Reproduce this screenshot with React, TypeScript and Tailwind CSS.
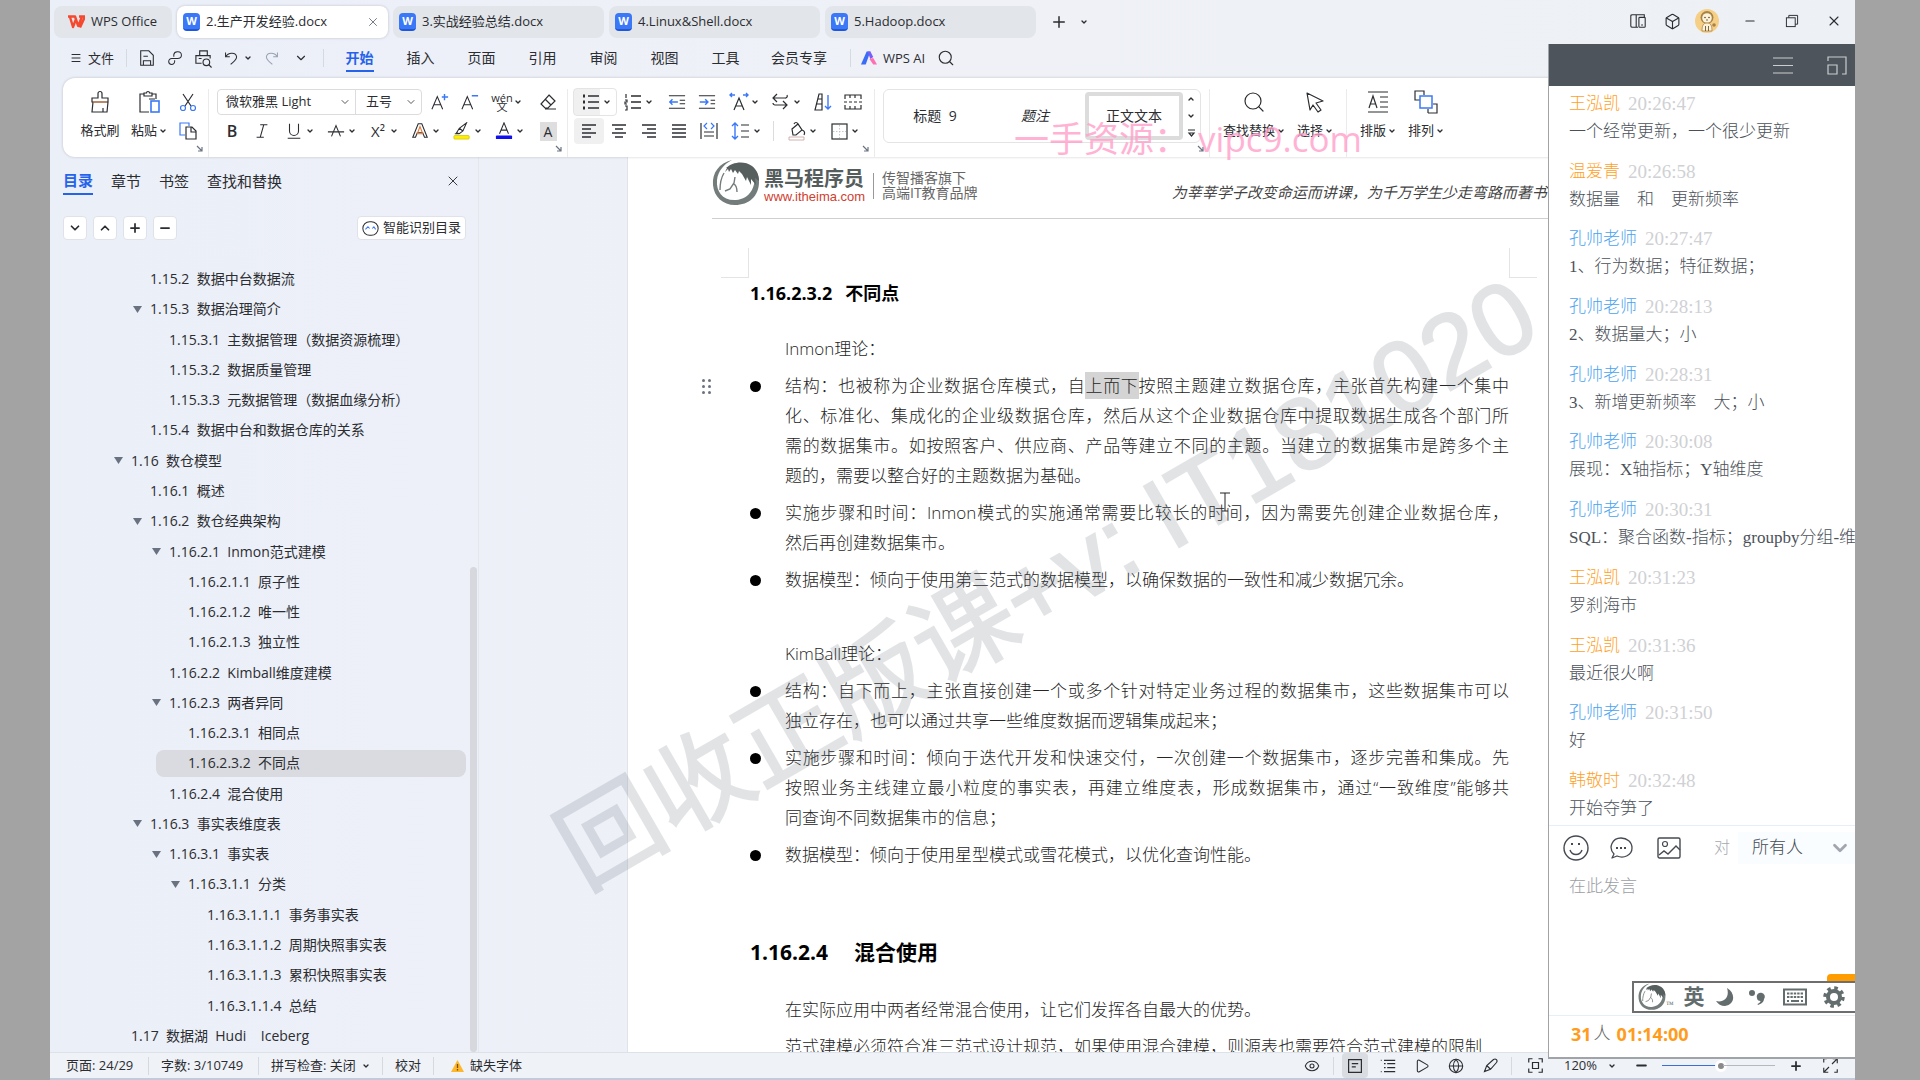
import React from 'react';
import {
  Search, X, Minus, Plus, ChevronDown, ChevronUp, Menu, Globe, Eye, Play, Box,
} from 'lucide-react';

type IconProps = { children: React.ReactNode; className?: string; size?: number; box?: number };

const Svg = ({ children, className = '', size = 20, box = 20 }: IconProps) => (
  <svg
    width={size}
    height={size}
    viewBox={`0 0 ${box} ${box}`}
    fill="none"
    stroke="currentColor"
    strokeWidth={1.2}
    className={className}
    aria-hidden="true"
  >
    {children}
  </svg>
);

const Chev = () => <ChevronDown className="w-2 h-2 shrink-0" strokeWidth={4} />;

const Tool = ({ label, children, active = false }: { label: string; children: React.ReactNode; active?: boolean }) => (
  <button
    aria-label={label}
    className={`w-[30px] h-[26px] shrink-0 flex items-center justify-center rounded ${active ? 'bg-[#f0f0f0]' : ''}`}
  >
    {children}
  </button>
);

const DropTool = ({ label, children }: { label: string; children: React.ReactNode }) => (
  <button aria-label={label} className="w-[42px] h-[26px] shrink-0 pl-[5px] flex items-center">
    <span className="w-6 flex justify-center">{children}</span>
    <Chev />
  </button>
);

const BigTool = ({ label, icon, drop = true }: { label: string; icon: React.ReactNode; drop?: boolean }) => (
  <button className="flex flex-col items-center shrink-0 text-[13px]">
    <span className="h-[26px] flex items-center">{icon}</span>
    <span className="h-[26px] mt-[3px] flex items-center gap-0.5 whitespace-nowrap">
      {label}
      {drop && <Chev />}
    </span>
  </button>
);

const Launcher = () => (
  <Svg size={8} box={8} className="absolute right-1 bottom-1 text-gray-500">
    <path d="M1 1l5 5M6 2v4H2" />
  </Svg>
);

const Lines = ({ rows }: { rows: [number, number][] }) => (
  <Svg>
    {rows.map(([a, b], i) => (
      <path key={i} d={`M${a} ${4 + i * 4}H${b}`} strokeWidth={1.4} />
    ))}
  </Svg>
);

const HorseLogo = ({ size }: { size: number }) => (
  <svg width={size} height={size} viewBox="0 0 48 48" fill="none" aria-hidden="true">
    <path
      d="M20 1C7 4 0 14 1 26c1 12 10 20 22 20 14 0 24-9 24-23 0-4-1-8-3-11l-2 1c3 14-4 27-18 28C11 42 4 33 5 21 6 12 12 5 20 1z"
      fill="#737b7b"
    />
    <path
      d="M14 9C20 3 32 1 40 7c5 4 7 9 7 15l-4-3 1 7-5-6 0 6-4-8-1 4-4-7-3-3-1 3-3-4-2 3-2-4-2 3-1-3-3 3 2-4z"
      fill="#565e5e"
    />
    <path d="M12 14c-3 5-4 11-4 17M23 18l-1 6-4 6-5 2M22 25c3 2 3 5 3 8" stroke="#737b7b" strokeWidth="1.4" />
  </svg>
);

const tree: { level: number; no: string; title: string; open?: boolean; active?: boolean }[] = [
  { level: 1, no: '1.15.2', title: '数据中台数据流' },
  { level: 1, no: '1.15.3', title: '数据治理简介', open: true },
  { level: 2, no: '1.15.3.1', title: '主数据管理（数据资源梳理）' },
  { level: 2, no: '1.15.3.2', title: '数据质量管理' },
  { level: 2, no: '1.15.3.3', title: '元数据管理（数据血缘分析）' },
  { level: 1, no: '1.15.4', title: '数据中台和数据仓库的关系' },
  { level: 0, no: '1.16', title: '数仓模型', open: true },
  { level: 1, no: '1.16.1', title: '概述' },
  { level: 1, no: '1.16.2', title: '数仓经典架构', open: true },
  { level: 2, no: '1.16.2.1', title: 'Inmon范式建模', open: true },
  { level: 3, no: '1.16.2.1.1', title: '原子性' },
  { level: 3, no: '1.16.2.1.2', title: '唯一性' },
  { level: 3, no: '1.16.2.1.3', title: '独立性' },
  { level: 2, no: '1.16.2.2', title: 'Kimball维度建模' },
  { level: 2, no: '1.16.2.3', title: '两者异同', open: true },
  { level: 3, no: '1.16.2.3.1', title: '相同点' },
  { level: 3, no: '1.16.2.3.2', title: '不同点', active: true },
  { level: 2, no: '1.16.2.4', title: '混合使用' },
  { level: 1, no: '1.16.3', title: '事实表维度表', open: true },
  { level: 2, no: '1.16.3.1', title: '事实表', open: true },
  { level: 3, no: '1.16.3.1.1', title: '分类', open: true },
  { level: 4, no: '1.16.3.1.1.1', title: '事务事实表' },
  { level: 4, no: '1.16.3.1.1.2', title: '周期快照事实表' },
  { level: 4, no: '1.16.3.1.1.3', title: '累积快照事实表' },
  { level: 4, no: '1.16.3.1.1.4', title: '总结' },
  { level: 0, no: '1.17', title: '数据湖  Hudi    Iceberg' },
];

const indents = ['ml-[49px]', 'ml-[68px]', 'ml-[87px]', 'ml-[106px]', 'ml-[125px]'];

const messages = [
  { name: '王泓凯', time: '20:26:47', text: '一个经常更新，一个很少更新' },
  { name: '温爱青', time: '20:26:58', text: '数据量　和　更新频率' },
  { name: '孔帅老师', time: '20:27:47', text: '1、行为数据；特征数据；', teacher: true },
  { name: '孔帅老师', time: '20:28:13', text: '2、数据量大；小', teacher: true },
  { name: '孔帅老师', time: '20:28:31', text: '3、新增更新频率　大；小', teacher: true },
  { name: '孔帅老师', time: '20:30:08', text: '展现：X轴指标；Y轴维度', teacher: true },
  { name: '孔帅老师', time: '20:30:31', text: 'SQL：聚合函数-指标；groupby分组-维度', teacher: true },
  { name: '王泓凯', time: '20:31:23', text: '罗刹海市' },
  { name: '王泓凯', time: '20:31:36', text: '最近很火啊' },
  { name: '孔帅老师', time: '20:31:50', text: '好', teacher: true },
  { name: '韩敬时', time: '20:32:48', text: '开始夺笋了' },
];

const WordBadge = () => (
  <span className="w-[17px] h-[18px] shrink-0 rounded-sm bg-[#3b78f7] border-b-2 border-[#1f57d8] text-white text-[11px] leading-4 font-bold text-center">
    W
  </span>
);

const DocTab = ({ name, active = false }: { name: string; active?: boolean }) => (
  <div
    className={`w-[211px] h-8 shrink-0 px-1.5 rounded-lg flex items-center text-[13px] ${
      active ? 'bg-white shadow-[0_0_3px_rgba(0,0,0,0.2)]' : 'bg-[#e2e5ea]'
    }`}
  >
    <WordBadge />
    <span className="ml-1.5 whitespace-nowrap">{name}</span>
    {active && (
      <button aria-label="关闭标签" className="ml-auto mr-0.5">
        <X className="w-3.5 h-3.5 text-gray-500" strokeWidth={1.6} />
      </button>
    )}
  </div>
);

const TitleBar = () => (
  <header className="h-[42px] pt-1.5 pl-1 flex items-start gap-[5px]">
    <div className="w-[118px] h-8 shrink-0 pl-3.5 rounded-lg bg-[#e2e5ea] flex items-center text-[13px]">
      <svg width="17" height="14" viewBox="0 0 17 14" fill="none" stroke="#f5492f" strokeWidth="2.4" aria-hidden="true">
        <path d="M0 1.500h7l3 9M2 2l3 10 3-8M10 12l4-10.500M11 1.500h6l-5 11" strokeLinejoin="round" />
      </svg>
      <span className="ml-1.5 whitespace-nowrap">WPS Office</span>
    </div>
    <DocTab name="2.生产开发经验.docx" active />
    <DocTab name="3.实战经验总结.docx" />
    <DocTab name="4.Linux&Shell.docx" />
    <DocTab name="5.Hadoop.docx" />
    <button aria-label="新建" className="w-8 h-8 ml-0.5 flex items-center justify-center">
      <Plus className="w-[18px] h-[18px]" strokeWidth={2} />
    </button>
    <button aria-label="标签列表" className="h-8 flex items-center">
      <Chev />
    </button>
    <div className="ml-auto h-[30px] flex items-center">
      <button aria-label="侧栏" className="w-[34px] flex justify-center">
        <Svg size={18}>
          <path d="M8 3H4C2.500 3 2 3.500 2 4.500v11c0 1 .5 1.500 2 1.500h6M8 3v14M8 3h9v3" />
          <rect x="11" y="6" width="7" height="11" rx="1" />
          <path d="M13.500 14.500h2" />
        </Svg>
      </button>
      <button aria-label="应用" className="w-[34px] flex justify-center">
        <Box className="w-[17px] h-[17px]" strokeWidth={1.6} />
      </button>
      <button aria-label="账号" className="w-9 mr-1 flex justify-center">
        <svg width="24" height="24" viewBox="0 0 24 24" aria-hidden="true">
          <circle cx="12" cy="12" r="12" fill="#f6cf86" />
          <circle cx="12" cy="8.500" r="6.500" fill="#a98346" />
          <circle cx="12" cy="9" r="4.800" fill="#fdf3d9" />
          <path d="M7 22c0-5 1-8 5-8s5 3 5 8z" fill="#fdf3d9" stroke="#a98346" strokeWidth="0.8" />
          <circle cx="10" cy="8.500" r=".8" fill="#5c4524" />
          <circle cx="14" cy="8.500" r=".8" fill="#5c4524" />
          <path d="M11 11h2M10.500 17v5M13.500 17v5" stroke="#5c4524" strokeWidth=".8" />
          <circle cx="19" cy="16" r="1.800" fill="#a98346" />
        </svg>
      </button>
      <button aria-label="最小化" className="w-[42px] flex justify-center">
        <Minus className="w-3.5 h-3.5" strokeWidth={2} />
      </button>
      <button aria-label="还原" className="w-[42px] flex justify-center">
        <Svg size={16}>
          <rect x="3" y="6" width="11" height="11" />
          <path d="M6 6V3h11v11h-3" />
        </Svg>
      </button>
      <button aria-label="关闭" className="w-[42px] flex justify-center">
        <X className="w-4 h-4" strokeWidth={1.6} />
      </button>
    </div>
  </header>
);

const Divider = () => <span className="w-px h-[18px] shrink-0 bg-[#d5d9e0]" />;

const MenuBar = () => (
  <nav className="h-8 pl-5 flex items-center text-sm">
    <button className="w-14 shrink-0 flex items-center gap-1.5">
      <Menu className="w-3 h-3.5 shrink-0" strokeWidth={2} />
      <span className="text-[13px]">文件</span>
    </button>
    <Divider />
    <div className="w-[196px] shrink-0 pl-1.5 flex items-center">
      <button aria-label="保存" className="w-7 flex justify-center">
        <Svg size={18}>
          <path d="M3 2h9l5 5v11H3zM6 18v-5h8v5M6 8h5" />
        </Svg>
      </button>
      <button aria-label="输出" className="w-7 flex justify-center">
        <Svg size={17}>
          <path d="M8 8V5.500a4.500 4 0 1 1 4.500 4.500H8M8 10H5.500A3.500 3.500 0 1 0 9 13.500V12" />
        </Svg>
      </button>
      <button aria-label="打印预览" className="w-7 flex justify-center">
        <Svg size={19}>
          <path d="M6 7V2h8v5M8 15H2V7h15v3M5 10h3" />
          <circle cx="13" cy="14" r="3.500" />
          <path d="M15.500 16.500l3 3" />
        </Svg>
      </button>
      <button aria-label="撤销" className="w-9 flex items-center pl-1.5 gap-1">
        <Svg size={17}>
          <path d="M3 3v5h5M3 8c3-5 12-6 13 0 0 4-4 6-7 9" />
        </Svg>
        <Chev />
      </button>
      <button aria-label="恢复" className="w-9 flex justify-center text-gray-400">
        <Svg size={17}>
          <path d="M17 3v5h-5M17 8c-3-5-12-6-13 0 0 4 4 6 7 9" />
        </Svg>
      </button>
      <button aria-label="更多" className="w-4 ml-1 flex justify-center">
        <ChevronDown className="w-3.5 h-3.5" strokeWidth={2} />
      </button>
    </div>
    <Divider />
    <div className="pl-[5px] pr-2 flex items-center">
      {['开始', '插入', '页面', '引用', '审阅', '视图', '工具'].map((item, i) => (
        <button key={item} className="w-[61px] h-8 shrink-0 flex justify-center">
          <span
            className={`h-[30px] leading-8 border-b-2 whitespace-nowrap ${
              i === 0 ? 'text-[#2563eb] font-bold border-[#2563eb]' : 'border-transparent'
            }`}
          >
            {item}
          </span>
        </button>
      ))}
      <button className="w-[86px] shrink-0 whitespace-nowrap">会员专享</button>
    </div>
    <Divider />
    <button className="ml-2.5 flex items-center gap-1.5 text-[13px] whitespace-nowrap">
      <svg width="16" height="15" viewBox="0 0 17 15" aria-hidden="true">
        <path d="M6 0h4L5 14H0z" fill="#3a6df5" />
        <path d="M7 0h3l3 6-3 2z" fill="#7b5bf6" />
        <path d="M9 8l4-1 4 7h-4z" fill="#ff6fb1" />
      </svg>
      WPS AI
    </button>
    <button aria-label="搜索" className="ml-3">
      <Search className="w-[18px] h-[18px]" strokeWidth={1.5} />
    </button>
  </nav>
);

const Ribbon = () => (
  <section className="h-[79px] ml-[13px] mt-1 pt-[11px] bg-white rounded-l-xl shadow-[0_0_3px_rgba(0,0,0,0.2)] flex text-[13px] overflow-hidden relative z-10">
    <div className="relative w-[146px] h-[68px] shrink-0 pl-4 flex items-start border-r border-[#ebebeb]">
      <div className="w-[42px] flex justify-center">
        <BigTool
          label="格式刷"
          drop={false}
          icon={
            <Svg size={24} box={24}>
              <path d="M10 8V3.500a2 2 0 0 1 4 0V8h6v4H4V8zM5 12l-1 10h15l1-10M15 18v4" />
              <path d="M5 12h14" stroke="#e07b39" />
            </Svg>
          }
        />
      </div>
      <div className="w-[36px] ml-2.5 flex justify-center">
        <BigTool
          label="粘贴"
          icon={
            <Svg size={24} box={24}>
              <path d="M7 4H3v18h9M15 4h4v5" />
              <path d="M7 6V3h2.500a1.500 1.500 0 0 1 3 0H15v3z" />
              <rect x="14" y="11" width="8" height="11" stroke="#3b78f7" strokeWidth="1.600" />
              <path d="M12 9h6" />
            </Svg>
          }
        />
      </div>
      <div className="ml-1.5 flex flex-col gap-[3px]">
        <Tool label="剪切">
          <Svg>
            <path d="M5 2l8 12M15 2L7 14" />
            <circle cx="5" cy="16" r="2.500" stroke="#3b78f7" />
            <circle cx="15" cy="16" r="2.500" stroke="#3b78f7" />
          </Svg>
        </Tool>
        <Tool label="复制">
          <Svg>
            <path d="M7 14H2V2h9v3" stroke="#3b78f7" />
            <path d="M8 6h6l4 4v8H8zM13 6v5h5" />
          </Svg>
        </Tool>
      </div>
      <Launcher />
    </div>

    <div className="relative w-[359px] h-[68px] shrink-0 pl-2 flex flex-col gap-[3px] border-r border-[#ebebeb]">
      <div className="flex items-center">
        <div className="w-[205px] h-[26px] mr-[3px] flex border border-[#dcdcdc] rounded">
          <label className="relative w-[138px] flex items-center border-r border-[#dcdcdc]">
            <select aria-label="字体" className="appearance-none w-full pl-2 text-[13px] bg-transparent">
              <option>微软雅黑 Light</option>
            </select>
            <ChevronDown className="absolute right-1 w-3 h-3" strokeWidth={1.6} />
          </label>
          <label className="relative w-[65px] flex items-center">
            <select aria-label="字号" className="appearance-none w-full pl-2.5 text-[13px] bg-transparent">
              <option>五号</option>
            </select>
            <ChevronDown className="absolute right-1 w-3 h-3" strokeWidth={1.6} />
          </label>
        </div>
        <Tool label="增大字号">
          <Svg size={18}>
            <path d="M1 18L7 4l6 14M3 13h8" />
            <path d="M15 1v7M12 4.500h7" stroke="#3b78f7" strokeWidth={1.6} />
          </Svg>
        </Tool>
        <Tool label="减小字号">
          <Svg size={18}>
            <path d="M1 18L7 4l6 14M3 13h8" />
            <path d="M12 3h7" stroke="#3b78f7" strokeWidth={1.6} />
          </Svg>
        </Tool>
        <DropTool label="拼音指南">
          <span className="flex flex-col items-center text-[11px] leading-[9px]">
            <span>wén</span>
            <span>文</span>
          </span>
        </DropTool>
        <span className="w-1.5" />
        <Tool label="清除格式">
          <Svg>
            <path d="M11 3l6 6-7 7H7l-4-4zM7 7l6 6M7 17h11" />
          </Svg>
        </Tool>
      </div>
      <div className="flex items-center">
        <Tool label="加粗">
          <span className="text-base font-semibold">B</span>
        </Tool>
        <Tool label="倾斜">
          <Svg size={18}>
            <path d="M8 3h8M4 17h8M12 3L8 17" />
          </Svg>
        </Tool>
        <DropTool label="下划线">
          <Svg size={18}>
            <path d="M5 2v8a5 5 0 0 0 10 0V2M3 18h14" />
          </Svg>
        </DropTool>
        <DropTool label="删除线">
          <Svg size={18}>
            <path d="M5 16l5-12 5 12M1 11h18" />
          </Svg>
        </DropTool>
        <DropTool label="上标">
          <span className="text-[15px]">X²</span>
        </DropTool>
        <DropTool label="文字效果">
          <Svg size={18}>
            <path d="M2 17L8 2h4l6 15h-3l-2-5H7l-2 5z" />
            <path d="M7 13l3-8 3 8z" stroke="#e07b39" />
          </Svg>
        </DropTool>
        <DropTool label="突出显示">
          <Svg size={18}>
            <path d="M4 12l3-5 8-6-4 9-4 3zM7 7l4 3M2 13h5" />
            <rect x="1" y="15" width="17" height="4" rx="1" fill="#ffee00" stroke="#cfc100" strokeWidth=".8" />
          </Svg>
        </DropTool>
        <DropTool label="字体颜色">
          <Svg size={18}>
            <path d="M5 13l5-12 5 12M7 9h6" />
            <rect x="1" y="15" width="18" height="4" rx="1" fill="#1010f0" stroke="none" />
          </Svg>
        </DropTool>
        <span className="w-1" />
        <Tool label="字符底纹">
          <span className="w-[17px] h-[19px] leading-[19px] bg-[#dedede] text-sm">A</span>
        </Tool>
      </div>
      <Launcher />
    </div>

    <div className="relative w-[307px] h-[68px] shrink-0 pl-1.5 flex flex-col gap-[3px] border-r border-[#ebebeb]">
      <div className="flex items-center">
        <span className="rounded border border-[#e4e4e4] -m-px bg-[linear-gradient(to_right,#f0f0f0_26px,#fff_26px)]">
          <DropTool label="项目符号">
            <Svg>
              <path d="M7 4h11M7 10h11M7 16h11" strokeWidth={1.4} />
              <path d="M2 4h2M2 10h2M2 16h2" strokeWidth={3} />
            </Svg>
          </DropTool>
        </span>
        <DropTool label="编号">
          <Svg>
            <path d="M8 4h10M8 10h10M8 16h10" strokeWidth={1.4} />
            <path d="M3 2v4M2 8h2v2H2v2h2M2 14h2v4H2" />
          </Svg>
        </DropTool>
        <span className="w-1" />
        <Tool label="减少缩进">
          <Svg size={18}>
            <path d="M1 3h18M13 8h6M13 12h6M1 17h18" />
            <path d="M2 10h9M5 7l-3 3 3 3" stroke="#3b78f7" strokeWidth={1.6} />
          </Svg>
        </Tool>
        <Tool label="增加缩进">
          <Svg size={18}>
            <path d="M1 3h18M14 8h5M14 12h5M1 17h18" />
            <path d="M2 10h9M8 7l3 3-3 3" stroke="#3b78f7" strokeWidth={1.6} />
          </Svg>
        </Tool>
        <DropTool label="中文版式">
          <Svg>
            <path d="M5 18l5-12 5 12M7 14h6" />
            <path d="M6 3H1M3 1L1 3l2 2M14 3h5M17 1l2 2-2 2" stroke="#3b78f7" strokeWidth={1.4} />
          </Svg>
        </DropTool>
        <DropTool label="换行符">
          <Svg>
            <path d="M6 2L2 6l4 4M2 6h12a2 2 0 0 0 2-3M4 13h12M12 9l4 4-4 4M4 13c-1 0-2-1-2-2" />
          </Svg>
        </DropTool>
        <span className="w-0.5" />
        <Tool label="排序">
          <Svg>
            <path d="M2 18L6 2h3v16zM4 12h5M5 7h4" />
            <path d="M15 3v14M12 14l3 3 3-3" stroke="#3b78f7" strokeWidth={1.4} />
          </Svg>
        </Tool>
        <Tool label="制表位">
          <Svg>
            <path d="M2 7V3h16v4M2 13v4h16v-4M7 3v3M12 3v3M7 17v-3M12 17v-3M1 10h3M6 10h3M11 10h3M16 10h3" />
          </Svg>
        </Tool>
      </div>
      <div className="flex items-center">
        <Tool label="左对齐" active><Lines rows={[[3, 17], [3, 12], [3, 17], [3, 12]]} /></Tool>
        <Tool label="居中"><Lines rows={[[3, 17], [6, 14], [3, 17], [6, 14]]} /></Tool>
        <Tool label="右对齐"><Lines rows={[[3, 17], [8, 17], [3, 17], [8, 17]]} /></Tool>
        <Tool label="两端对齐"><Lines rows={[[3, 17], [3, 17], [3, 17], [3, 17]]} /></Tool>
        <Tool label="分散对齐">
          <Svg>
            <path d="M2 2v16M18 2v16M5 11h10M5 15h10" />
            <path d="M8 2L5 5l3 3M12 2l3 3-3 3" stroke="#3b78f7" />
          </Svg>
        </Tool>
        <DropTool label="行距">
          <Svg>
            <path d="M10 4h8M10 10h8M10 16h8" />
            <path d="M4 2v16M1 5l3-3 3 3M1 15l3 3 3-3" stroke="#3b78f7" strokeWidth={1.4} />
          </Svg>
        </DropTool>
        <span className="w-2 mr-1.5 h-5 border-r border-[#dcdcdc]" />
        <DropTool label="底纹">
          <Svg>
            <path d="M5 8l6-5 4 6-6 5H6zM15 9c3 1 3 3 2 5M7 3c1-2 3-2 4 0" />
            <path d="M2 16h15v3H2z" stroke="#c9a0a0" strokeWidth=".8" />
          </Svg>
        </DropTool>
        <DropTool label="边框">
          <Svg>
            <rect x="3" y="3" width="15" height="15" />
            <path d="M10.500 4v13M4 10.500h13" stroke="#bbb" strokeDasharray="1.500 1.500" strokeWidth=".8" />
          </Svg>
        </DropTool>
      </div>
      <Launcher />
    </div>

    <div className="relative w-[335px] h-[68px] shrink-0 pl-2 border-r border-[#ebebeb]">
      <div className="w-[318px] h-[54px] pl-px flex items-center border border-[#e4e4e4] rounded-md">
        <button className="w-[100px] text-sm">标题&nbsp; 9</button>
        <button className="w-[100px] text-sm italic">题注</button>
        <button className="w-[98px] h-12 border-4 border-[#dcdcdc] rounded text-sm whitespace-nowrap">正文文本</button>
        <div className="w-4 h-full flex flex-col items-center justify-around">
          <button aria-label="上一行"><ChevronUp className="w-2 h-2" strokeWidth={4} /></button>
          <button aria-label="下一行"><Chev /></button>
          <button aria-label="展开样式">
            <Svg size={9} box={9}>
              <path d="M1 1h7M2 4h5L4.500 7z" />
            </Svg>
          </button>
        </div>
      </div>
      <Launcher />
    </div>

    <div className="h-[68px] w-[137px] shrink-0 pl-[13px] flex items-start gap-3 border-r border-[#ebebeb]">
      <BigTool label="查找替换" icon={<Search className="w-6 h-6" strokeWidth={1.2} />} />
      <BigTool
        label="选择"
        icon={
          <Svg size={24} box={24}>
            <path d="M4 3l16 8-7 2 5 7-3 2-5-7-3 5z" strokeLinejoin="round" />
          </Svg>
        }
      />
    </div>
    <div className="h-[68px] pl-[13px] flex items-start gap-3">
      <BigTool
        label="排版"
        icon={
          <Svg size={24} box={24}>
            <path d="M2 2h20M2 22h20M14 7h8M14 12h8M14 17h8M3 18l4-12 4 12M4 14h6" />
          </Svg>
        }
      />
      <BigTool
        label="排列"
        icon={
          <Svg size={24} box={24}>
            <path d="M6 10H1V1h9v4M14 23h9v-9h-4M14 19v4" />
            <rect x="6" y="6" width="12" height="12" stroke="#3b78f7" strokeWidth={1.5} />
          </Svg>
        }
      />
    </div>
  </section>
);

const SquareButton = ({ label, children }: { label: string; children: React.ReactNode }) => (
  <button
    aria-label={label}
    className="w-6 h-6 flex items-center justify-center bg-white border border-[#dfe2e8] rounded"
  >
    {children}
  </button>
);

const Outline = () => (
  <aside className="relative w-[429px] shrink-0 flex flex-col border-r border-[#e5e7ee]">
    <div className="h-12 pl-[13px] pr-[17px] flex items-center text-[15px]">
      <button className="h-7 mr-[18px] text-[#2563eb] font-bold border-b-2 border-[#2563eb]">目录</button>
      <button className="h-7 mr-[18px]">章节</button>
      <button className="h-7 mr-[18px]">书签</button>
      <button className="h-7">查找和替换</button>
      <button aria-label="关闭目录" className="ml-auto">
        <X className="w-4 h-4" strokeWidth={1.4} />
      </button>
    </div>
    <div className="mt-[11px] pl-[13px] pr-3 flex items-center gap-1.5">
      <SquareButton label="展开"><ChevronDown className="w-3.5 h-3.5" strokeWidth={3} /></SquareButton>
      <SquareButton label="折叠"><ChevronUp className="w-3.5 h-3.5" strokeWidth={3} /></SquareButton>
      <SquareButton label="升级"><Plus className="w-3.5 h-3.5" strokeWidth={3} /></SquareButton>
      <SquareButton label="降级"><Minus className="w-3.5 h-3.5" strokeWidth={3} /></SquareButton>
      <button className="ml-auto h-6 px-1 flex items-center gap-1 bg-white border border-[#dfe2e8] rounded text-[13px] whitespace-nowrap">
        <Svg size={17}>
          <rect x="1" y="2" width="18" height="16" rx="8" />
          <path d="M4 11l3-3 2 2M12 10l2-2 2 3" stroke="#3b78f7" />
        </Svg>
        智能识别目录
      </button>
    </div>
    <ul className="mt-6 mb-px flex-1 flex flex-col text-sm">
      {tree.map((row) => (
        <li key={row.no} className="flex-1 flex items-center">
          <a
            href="#section"
            className={`h-[27px] flex-1 mr-3 pl-2.5 flex items-center rounded-lg whitespace-pre ${
              indents[row.level]
            } ${row.active ? 'bg-[#d9dbe1]' : ''}`}
          >
            <span className="w-[22px] shrink-0 pl-[5px] text-gray-500">
              {row.open && (
                <svg width="9" height="7" viewBox="0 0 9 7" fill="currentColor" aria-hidden="true">
                  <path d="M0 0h9L4.500 7z" />
                </svg>
              )}
            </span>
            <span>{`${row.no}  ${row.title}`}</span>
          </a>
        </li>
      ))}
    </ul>
    <span className="absolute right-px bottom-0 top-[410px] w-[7px] rounded-full bg-[#d6d8dd]" />
  </aside>
);

const Para = ({ children }: { children: React.ReactNode }) => <p className="pl-[35px]">{children}</p>;

// Every entry but the last of `lines` fills the measure.
const Bullet = ({ lines, handle = false }: { lines: React.ReactNode[]; handle?: boolean }) => (
  <li className="relative mt-[7px] flex">
    {handle && (
      <span className="absolute -left-12 top-2 grid grid-cols-2 gap-[3px]">
        {[0, 1, 2, 3, 4, 5].map((n) => (
          <i key={n} className="w-[3px] h-[3px] rounded-full bg-gray-500" />
        ))}
      </span>
    )}
    <span className="w-[35px] shrink-0 pt-2.5">
      <i className="block w-[11px] h-[11px] rounded-full bg-black" />
    </span>
    <div className="flex-1">
      {lines.map((line, i) => (
        <p
          key={i}
          className={`whitespace-nowrap ${i < lines.length - 1 ? 'text-justify [text-align-last:justify]' : ''}`}
        >
          {line}
        </p>
      ))}
    </div>
  </li>
);

const DocumentPage = () => (
  <main className="flex-1 min-w-0 ml-[148px] bg-white border-l border-[#e0e3e9] overflow-hidden text-black">
    <div className="h-[62px] ml-[84px] pt-0.5 flex items-start border-b border-[#cfcfcf]">
      <HorseLogo size={48} />
      <div className="ml-1 pt-2.5 shrink-0 w-[101px] whitespace-nowrap text-[#565d5d]">
        <div className="text-xl leading-5 font-bold">黑马程序员</div>
        <div className="text-[13px] leading-4 text-[#d0402f] font-['Liberation_Sans']">www.itheima.com</div>
      </div>
      <span className="w-px h-[26px] mt-3.5 mx-2 shrink-0 bg-[#999]" />
      <div className="mt-[11px] shrink-0 text-sm leading-[15px] text-[#666] whitespace-nowrap">
        传智播客旗下
        <br />
        高端IT教育品牌
      </div>
      <div className="ml-[194px] mt-[23px] text-[15px] leading-5 italic text-[#444] whitespace-nowrap">
        为莘莘学子改变命运而讲课，为千万学生少走弯路而著书
      </div>
    </div>
    <div className="mt-[29px] ml-[93px] flex justify-between w-[816px] h-[30px]">
      <span className="w-7 border-r border-b border-[#e4e4e4]" />
      <span className="w-7 border-l border-b border-[#e4e4e4]" />
    </div>
    <article className="w-[759px] ml-[122px] text-[17px] leading-[30px] font-light text-[#262626]">
      <h3 className="flex gap-[13px] text-lg leading-[30px] mb-[26px] font-bold text-black">
        <span>1.16.2.3.2</span>
        <span>不同点</span>
      </h3>
      <Para>Inmon理论：</Para>
      <ul>
        <Bullet
          handle
          lines={[
            <>结构：也被称为企业数据仓库模式，自<mark className="bg-[#d4d4d4] text-inherit py-0.5">上而下</mark>按照主题建立数据仓库，主张首先构建一个集中</>,
            '化、标准化、集成化的企业级数据仓库，然后从这个企业数据仓库中提取数据生成各个部门所',
            '需的数据集市。如按照客户、供应商、产品等建立不同的主题。当建立的数据集市是跨多个主',
            '题的，需要以整合好的主题数据为基础。',
          ]}
        />
        <Bullet
          lines={[
            '实施步骤和时间：Inmon模式的实施通常需要比较长的时间，因为需要先创建企业数据仓库，',
            '然后再创建数据集市。',
          ]}
        />
        <Bullet lines={['数据模型：倾向于使用第三范式的数据模型，以确保数据的一致性和减少数据冗余。']} />
      </ul>
      <div className="mt-11">
        <Para>KimBall理论：</Para>
      </div>
      <ul>
        <Bullet
          lines={[
            '结构：自下而上，主张直接创建一个或多个针对特定业务过程的数据集市，这些数据集市可以',
            '独立存在，也可以通过共享一些维度数据而逻辑集成起来；',
          ]}
        />
        <Bullet
          lines={[
            '实施步骤和时间：倾向于迭代开发和快速交付，一次创建一个数据集市，逐步完善和集成。先',
            '按照业务主线建立最小粒度的事实表，再建立维度表，形成数据集市，通过“一致维度”能够共',
            '同查询不同数据集市的信息；',
          ]}
        />
        <Bullet lines={['数据模型：倾向于使用星型模式或雪花模式，以优化查询性能。']} />
      </ul>
      <h3 className="mt-[66px] mb-[27px] flex gap-[26px] text-[21px] leading-8 font-bold text-black">
        <span>1.16.2.4</span>
        <span>混合使用</span>
      </h3>
      <Para>在实际应用中两者经常混合使用，让它们发挥各自最大的优势。</Para>
      <div className="mt-[7px] whitespace-nowrap">
        <Para>范式建模必须符合准三范式设计规范，如果使用混合建模，则源表也需要符合范式建模的限制</Para>
      </div>
    </article>
  </main>
);

const StatusBar = () => (
  <footer className="h-7 shrink-0 border-t border-[#dde1e8] border-b-2 border-b-[#c3cada] bg-[#eff2f7] flex items-center text-[13px] whitespace-nowrap">
    <span className="w-[98px] pl-4">页面: 24/29</span>
    <Divider />
    <span className="w-[109px] pl-3">字数: 3/10749</span>
    <Divider />
    <button className="w-[123px] pl-3 flex items-center gap-1.5">拼写检查: 关闭 <Chev /></button>
    <Divider />
    <button className="w-[50px]">校对</button>
    <Divider />
    <button className="pl-[17px] flex items-center gap-1.5">
      <svg width="13" height="12" viewBox="0 0 13 12" aria-hidden="true">
        <path d="M6.500 0L13 12H0z" fill="#fcb72b" />
        <path d="M6.500 4v4M6.500 9v1.500" stroke="#7a4b00" strokeWidth="1.300" />
      </svg>
      缺失字体
    </button>
    <div className="ml-auto flex items-center">
      <button aria-label="护眼" className="w-[42px] flex justify-center"><Eye className="w-4 h-4" strokeWidth={1.6} /></button>
      <Divider />
      <button aria-label="页面视图" className="w-[26px] h-[25px] ml-2 mr-[3px] flex items-center justify-center rounded bg-[#d9dce1]">
        <Svg size={16}>
          <path d="M2 2h16v16H2zM6 7h8M6 11h5" strokeWidth={1.5} />
        </Svg>
      </button>
      <button aria-label="大纲" className="w-[34px] flex justify-center">
        <Svg size={16}>
          <path d="M1 3h1M5 3h14M5 7h2M9 7h10M5 12h2M9 12h10M1 17h1M5 17h14" strokeWidth={1.5} />
        </Svg>
      </button>
      <button aria-label="阅读" className="w-[34px] flex justify-center"><Play className="w-4 h-4" strokeWidth={1.6} /></button>
      <button aria-label="网页" className="w-[34px] flex justify-center"><Globe className="w-4 h-4" strokeWidth={1.6} /></button>
      <button aria-label="书写" className="w-[34px] flex justify-center">
        <Svg size={15}>
          <path d="M2 18l3-8L14 2c3-2 6 1 4 4l-8 9zM5 10l5 5" strokeWidth={1.5} />
        </Svg>
      </button>
      <span className="w-1" />
      <Divider />
      <button aria-label="适应页面" className="w-[46px] flex justify-center">
        <Svg size={15}>
          <path d="M1 6V1h5M14 1h5v5M19 14v5h-5M6 19H1v-5M6 6h8v8H6z" strokeWidth={1.6} />
        </Svg>
      </button>
      <button className="w-[62px] pl-1.5 pr-1 flex items-center justify-between">120% <Chev /></button>
      <button aria-label="缩小" className="w-[42px] flex justify-center"><Minus className="w-[15px] h-[15px]" strokeWidth={3} /></button>
      <label className="relative w-[113px] mr-3 h-4 flex items-center">
        <input type="range" aria-label="缩放" defaultValue={52} className="absolute inset-0 w-full opacity-0" />
        <span className="w-[57px] h-px bg-[#3b6fd8]" />
        <span className="w-3 h-3 -mx-1 rounded-full bg-[#8a8a8a] border-[3px] border-white" />
        <span className="flex-1 h-px bg-[#b5b8be]" />
      </label>
      <button aria-label="放大" className="w-[18px] flex justify-center"><Plus className="w-3.5 h-3.5" strokeWidth={3} /></button>
      <button aria-label="全屏" className="w-[50px] flex justify-center">
        <Svg size={15}>
          <path d="M13 1h6v6M7 19H1v-6M18 2l-6 6M2 18l6-6M1 6V1h4M19 15v4h-4" strokeWidth={1.5} />
        </Svg>
      </button>
    </div>
  </footer>
);

const ChatPanel = () => (
  <aside className="absolute z-30 right-0 top-11 bottom-[21px] w-[307px] flex flex-col bg-white border-l border-b-2 border-[#a0a3a8] overflow-hidden text-[17px] font-['Liberation_Serif','Noto_Sans_CJK_SC',serif] whitespace-nowrap">
    <div className="h-[42px] shrink-0 pr-2 flex items-center justify-end gap-[34px] bg-[#4e545b] text-[#c9cdd1]">
      <button aria-label="菜单">
        <Svg size={20}>
          <path d="M0 3h20M0 10.500h20M0 18h20" />
        </Svg>
      </button>
      <button aria-label="缩放窗口">
        <Svg size={20}>
          <path d="M1 6V2h18v17h-4M1 10h9v9H1z" />
        </Svg>
      </button>
    </div>
    <ul className="flex-1 pt-1 pb-0.5 pl-5 flex flex-col justify-between leading-7 font-light text-[#4b5159]">
      {messages.map((m) => (
        <li key={m.time}>
          <div className="h-7 flex items-center">
            <span className={m.teacher ? 'text-[#4aa3f0]' : 'text-[#ff9f1f]'}>{m.name}</span>
            <time className="ml-2 text-[19px] text-[#cfd1d4]">{m.time}</time>
          </div>
          <p className="whitespace-pre">{m.text}</p>
        </li>
      ))}
    </ul>
    <div className="h-11 shrink-0 pl-3.5 flex items-center border-t border-[#e6eff5] text-[#454a52]">
      <button aria-label="表情">
        <Svg size={26} box={26}>
          <circle cx="13" cy="13" r="12" strokeWidth={1.4} />
          <path d="M7 15c2 6 10 6 12 0" strokeWidth={1.4} />
          <path d="M9 8v2M16 8v2" strokeWidth={2} />
        </Svg>
      </button>
      <button aria-label="消息" className="ml-5">
        <Svg size={24} box={24}>
          <path d="M3 22l2-4C-1 12 3 2 12 2c6 0 11 4 11 10 0 7-8 11-15 8z" strokeWidth={1.3} strokeLinejoin="round" />
          <path d="M7 12h2M11 12h2M15 12h2" strokeWidth={2} />
        </Svg>
      </button>
      <button aria-label="图片" className="ml-6">
        <Svg size={24} box={24}>
          <rect x="1" y="2" width="22" height="20" rx="1.500" strokeWidth={1.4} />
          <circle cx="8" cy="8" r="2.500" />
          <path d="M2 19l5-4 4 3 8-8 4 4" strokeWidth={1.4} />
        </Svg>
      </button>
      <span className="w-4 ml-[33px] text-base text-[#a5a8ad] font-light">对</span>
      <label className="relative ml-2 flex-1 h-8 flex items-center bg-[#f9fdff]">
        <select aria-label="发送对象" className="appearance-none w-full pl-3.5 bg-transparent font-light">
          <option>所有人</option>
        </select>
        <ChevronDown className="absolute right-1 w-[22px] h-[22px] text-[#a2a6ae]" strokeWidth={3} />
      </label>
    </div>
    <div className="relative h-[146px] shrink-0">
      <textarea
        aria-label="聊天内容"
        placeholder="在此发言"
        className="w-full h-full pl-5 pt-[5px] resize-none outline-none font-light placeholder:text-[#9b9ea3]"
      />
      <button aria-label="发送" className="absolute right-0 top-[105px] w-7 h-6 rounded-tl bg-[#ff9c00]" />
      {/* input method bar floating over the send button */}
      <div className="absolute right-0 top-[112px] w-[223px] h-8 pl-1 flex items-center border-2 border-r-0 border-[#6e6e6e] bg-white text-[#646d6d]">
        <HorseLogo size={28} />
        <span className="text-[8px] mt-4 w-2">™</span>
        <button className="w-6 ml-2 text-[21px] leading-7 font-bold">英</button>
        <svg width="18" height="20" viewBox="0 0 18 20" fill="currentColor" className="ml-2.5" aria-hidden="true">
          <path d="M11 1c9 5 8 17-2 18-4 0-7-2-9-5 8 2 14-4 11-13z" />
        </svg>
        <svg width="18" height="18" viewBox="0 0 18 18" fill="currentColor" className="ml-3.5" aria-hidden="true">
          <circle cx="4" cy="5" r="3" />
          <path d="M9 10a4 4 0 1 1 7 1c0 3-3 5-6 6l-.500-1c2-1 3-2 3-3-2 0-3.500-1-3.500-3z" />
        </svg>
        <svg width="24" height="18" viewBox="0 0 24 18" fill="none" stroke="currentColor" className="ml-[17px]" aria-hidden="true">
          <rect x="1" y="1.500" width="22" height="15" strokeWidth="2" />
          <path d="M4 5.500h16M4 9h16" strokeWidth="2.200" strokeDasharray="2.400 1" />
          <path d="M4 13h2M8 13h8M18 13h2" strokeWidth="2.200" />
        </svg>
        <svg width="22" height="22" viewBox="0 0 22 22" fill="none" stroke="currentColor" className="ml-4" aria-hidden="true">
          <circle cx="11" cy="11" r="6" strokeWidth="4" />
          <circle cx="11" cy="11" r="9" strokeWidth="3.500" strokeDasharray="3.530 3.530" />
        </svg>
      </div>
    </div>
    <div className="h-[42px] shrink-0 pl-[22px] pb-1.5 flex items-center border-t border-[#e6eff5] text-lg font-bold text-[#ff9c1c] font-['Open_Sans','Noto_Sans_CJK_SC',sans-serif]">
      31
      <span className="ml-0.5 mr-1.5 text-[17px] font-light text-[#666]">人</span>
      01:14:00
    </div>
  </aside>
);

const App: React.FC = () => (
  <div className="h-screen pl-[50px] pr-[65px] bg-[#a3a3a3] font-['Open_Sans','Noto_Sans_CJK_SC',sans-serif] text-[#2b2d31]">
    <div className="relative h-full flex flex-col overflow-hidden bg-linear-to-r from-[#ebeff8] via-[#eff1f7] to-[#edf1f5]">
      <TitleBar />
      <MenuBar />
      <Ribbon />
      <div className="flex-1 min-h-0 flex">
        <Outline />
        <DocumentPage />
      </div>
      <StatusBar />
      <div className="absolute z-20 left-[964px] top-[116px] text-[35px] leading-[46px] text-[#ff9fc8]/80 whitespace-pre pointer-events-none">
        一手资源： vipc9.com
      </div>
      <div className="absolute z-20 left-[997px] top-[583px] -translate-x-1/2 -translate-y-1/2 -rotate-30 text-[102px] leading-none text-[#606a76] opacity-[0.18] [-webkit-text-stroke:2px_#606a76] font-['Liberation_Sans','Noto_Sans_CJK_SC',sans-serif] whitespace-pre pointer-events-none">
        回收正版课+v: IT181020
      </div>
      <svg width="10" height="20" viewBox="0 0 10 20" fill="none" stroke="#222" className="absolute z-20 left-[1170px] top-[492px]" aria-hidden="true">
        <path d="M0 1h10M5 1v18M2 19h6" />
      </svg>
      <ChatPanel />
    </div>
  </div>
);

export default App;
